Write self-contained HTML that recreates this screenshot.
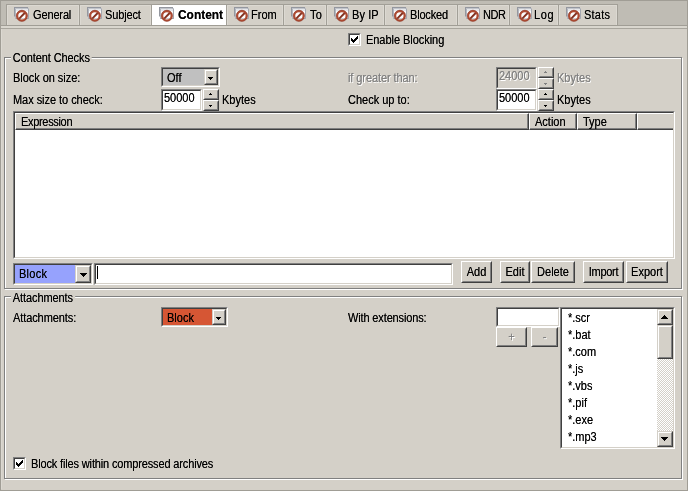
<!DOCTYPE html>
<html><head><meta charset="utf-8"><title>Content</title>
<style>
*{box-sizing:border-box;margin:0;padding:0}
html,body{width:688px;height:491px;overflow:hidden}
body{background:#d4d0c8;font-family:"Liberation Sans",sans-serif;font-size:11px;color:#000;position:relative;line-height:13px;text-shadow:0 0 0 rgba(0,0,0,.75)}
#w{position:absolute;left:0;top:0;width:688px;height:491px;will-change:transform;transform:translateZ(0)}
.a{position:absolute;white-space:nowrap}
.t{position:absolute;white-space:nowrap;height:13px;line-height:13px;font-size:12px;transform:scaleX(.9167);transform-origin:0 0}
.tab{position:absolute;top:4px;height:21px;border:1px solid #a29f97;border-bottom:none;background:#d4d0c8;box-shadow:inset 1px 1px 0 #dcd9d2,inset -1px 0 0 #dcd9d2}
.tab.sel{background:#fff;box-shadow:none}
.tab .ic{position:absolute;left:7px;top:2px}
.tab span{position:absolute;top:4px;height:13px;line-height:13px;white-space:nowrap;font-size:12px;transform:scaleX(.9167);transform-origin:0 0}
.sunk{position:absolute;border:1px solid;border-color:#808080 #fff #fff #808080;background:#fff;overflow:hidden}
.sunk:before{content:"";position:absolute;left:0;top:0;right:0;bottom:0;border:1px solid;border-color:#404040 #d4d0c8 #d4d0c8 #404040;pointer-events:none;z-index:5}
.btn{position:absolute;border:1px solid;border-color:#fff #404040 #404040 #fff;background:#d4d0c8;text-align:center}
.btn:before{content:"";position:absolute;left:0;top:0;right:0;bottom:0;border:1px solid;border-color:#d4d0c8 #808080 #808080 #d4d0c8;pointer-events:none}
.sb{border-color:#d4d0c8 #404040 #404040 #d4d0c8}
.sb:before{border-color:#fff #808080 #808080 #fff}
.btn span{position:absolute;left:0;right:0;text-align:center;height:13px;line-height:13px;font-size:12px;transform:scaleX(.9167);transform-origin:50% 0}
.grp{position:absolute;border:1px solid #808080;box-shadow:1px 1px 0 #fff, inset 1px 1px 0 #fff}
.leg{position:absolute;background:#d4d0c8;height:13px;line-height:13px;padding:0 2px;white-space:nowrap;font-size:12px;transform:scaleX(.9167);transform-origin:0 0}
.dis{color:#808080;text-shadow:0 0 0 rgba(128,128,128,.7),1px 1px 0 #fff}
.ar{position:absolute;display:block}
.chk{position:absolute;width:13px;height:13px;border:1px solid;border-color:#808080 #fff #fff #808080;background:#fff}
.chk:before{content:"";position:absolute;left:0;top:0;right:0;bottom:0;border:1px solid;border-color:#404040 #d4d0c8 #d4d0c8 #404040}
.chk svg{position:absolute;left:2px;top:2px}
.hd{position:absolute;top:1px;height:17px;background:#d4d0c8;border:1px solid;border-color:#fff #404040 #404040 #fff;box-shadow:inset -1px -1px 0 #808080}
</style></head><body><div id="w">

<div class="a" style="left:0;top:0;width:688px;height:491px;border:1px solid #a09d95"></div>
<div class="a" style="left:1px;top:1px;width:686px;height:24px;background:#bfbcb4"></div>
<div class="a" style="left:1px;top:25px;width:686px;height:1px;background:#a09d95"></div>
<div class="a" style="left:1px;top:26px;width:686px;height:2px;background:#d9d6ce"></div>
<div class="a" style="left:1px;top:28px;width:686px;height:1px;background:#a8a59d"></div>
<div class="a" style="left:1px;top:29px;width:1px;height:460px;background:#dcd9d2"></div>
<div class="tab" style="left:6px;width:74px"><svg class="ic" width="17" height="15" viewBox="0 0 17 15"><rect x="0.5" y="0.5" width="13" height="8.5" fill="#f4f4f6" stroke="#94979f"/><rect x="1.5" y="1.7" width="13" height="9.8" fill="#fafafb" stroke="#b4b7bf"/><path d="M14.5 2.2v9.3H1.8" fill="none" stroke="#a3a6ae"/><rect x="2" y="2.2" width="12" height="1.8" fill="#e4e6eb"/><circle cx="7.9" cy="8.8" r="4.7" fill="rgba(255,255,255,0.45)" stroke="#b04d34" stroke-width="2.1"/><circle cx="7.9" cy="8.8" r="5.6" fill="none" stroke="#83291a" stroke-width="0.6" opacity="0.8"/><path d="M5.2 11.6 L10.7 6" stroke="#84301f" stroke-width="1.9"/></svg><span style="left:26px;letter-spacing:-0.15px">General</span></div>
<div class="tab" style="left:79px;width:73px"><svg class="ic" width="17" height="15" viewBox="0 0 17 15"><rect x="0.5" y="0.5" width="13" height="8.5" fill="#f4f4f6" stroke="#94979f"/><rect x="1.5" y="1.7" width="13" height="9.8" fill="#fafafb" stroke="#b4b7bf"/><path d="M14.5 2.2v9.3H1.8" fill="none" stroke="#a3a6ae"/><rect x="2" y="2.2" width="12" height="1.8" fill="#e4e6eb"/><circle cx="7.9" cy="8.8" r="4.7" fill="rgba(255,255,255,0.45)" stroke="#b04d34" stroke-width="2.1"/><circle cx="7.9" cy="8.8" r="5.6" fill="none" stroke="#83291a" stroke-width="0.6" opacity="0.8"/><path d="M5.2 11.6 L10.7 6" stroke="#84301f" stroke-width="1.9"/></svg><span style="left:25px;letter-spacing:-0.15px">Subject</span></div>
<div class="tab sel" style="left:151px;width:76px"><svg class="ic" width="17" height="15" viewBox="0 0 17 15"><rect x="0.5" y="0.5" width="13" height="8.5" fill="#f4f4f6" stroke="#94979f"/><rect x="1.5" y="1.7" width="13" height="9.8" fill="#fafafb" stroke="#b4b7bf"/><path d="M14.5 2.2v9.3H1.8" fill="none" stroke="#a3a6ae"/><rect x="2" y="2.2" width="12" height="1.8" fill="#e4e6eb"/><circle cx="7.9" cy="8.8" r="4.7" fill="rgba(255,255,255,0.45)" stroke="#b04d34" stroke-width="2.1"/><circle cx="7.9" cy="8.8" r="5.6" fill="none" stroke="#83291a" stroke-width="0.6" opacity="0.8"/><path d="M5.2 11.6 L10.7 6" stroke="#84301f" stroke-width="1.9"/></svg><span style="font-weight:bold;transform:scaleX(0.995);transform-origin:0 0;left:26px;letter-spacing:0px">Content</span></div>
<div class="tab" style="left:226px;width:58px"><svg class="ic" width="17" height="15" viewBox="0 0 17 15"><rect x="0.5" y="0.5" width="13" height="8.5" fill="#f4f4f6" stroke="#94979f"/><rect x="1.5" y="1.7" width="13" height="9.8" fill="#fafafb" stroke="#b4b7bf"/><path d="M14.5 2.2v9.3H1.8" fill="none" stroke="#a3a6ae"/><rect x="2" y="2.2" width="12" height="1.8" fill="#e4e6eb"/><circle cx="7.9" cy="8.8" r="4.7" fill="rgba(255,255,255,0.45)" stroke="#b04d34" stroke-width="2.1"/><circle cx="7.9" cy="8.8" r="5.6" fill="none" stroke="#83291a" stroke-width="0.6" opacity="0.8"/><path d="M5.2 11.6 L10.7 6" stroke="#84301f" stroke-width="1.9"/></svg><span style="left:24px;letter-spacing:0px">From</span></div>
<div class="tab" style="left:283px;width:44px"><svg class="ic" width="17" height="15" viewBox="0 0 17 15"><rect x="0.5" y="0.5" width="13" height="8.5" fill="#f4f4f6" stroke="#94979f"/><rect x="1.5" y="1.7" width="13" height="9.8" fill="#fafafb" stroke="#b4b7bf"/><path d="M14.5 2.2v9.3H1.8" fill="none" stroke="#a3a6ae"/><rect x="2" y="2.2" width="12" height="1.8" fill="#e4e6eb"/><circle cx="7.9" cy="8.8" r="4.7" fill="rgba(255,255,255,0.45)" stroke="#b04d34" stroke-width="2.1"/><circle cx="7.9" cy="8.8" r="5.6" fill="none" stroke="#83291a" stroke-width="0.6" opacity="0.8"/><path d="M5.2 11.6 L10.7 6" stroke="#84301f" stroke-width="1.9"/></svg><span style="left:26px;letter-spacing:0.3px">To</span></div>
<div class="tab" style="left:326px;width:59px"><svg class="ic" width="17" height="15" viewBox="0 0 17 15"><rect x="0.5" y="0.5" width="13" height="8.5" fill="#f4f4f6" stroke="#94979f"/><rect x="1.5" y="1.7" width="13" height="9.8" fill="#fafafb" stroke="#b4b7bf"/><path d="M14.5 2.2v9.3H1.8" fill="none" stroke="#a3a6ae"/><rect x="2" y="2.2" width="12" height="1.8" fill="#e4e6eb"/><circle cx="7.9" cy="8.8" r="4.7" fill="rgba(255,255,255,0.45)" stroke="#b04d34" stroke-width="2.1"/><circle cx="7.9" cy="8.8" r="5.6" fill="none" stroke="#83291a" stroke-width="0.6" opacity="0.8"/><path d="M5.2 11.6 L10.7 6" stroke="#84301f" stroke-width="1.9"/></svg><span style="left:25px;letter-spacing:0.1px">By IP</span></div>
<div class="tab" style="left:384px;width:74px"><svg class="ic" width="17" height="15" viewBox="0 0 17 15"><rect x="0.5" y="0.5" width="13" height="8.5" fill="#f4f4f6" stroke="#94979f"/><rect x="1.5" y="1.7" width="13" height="9.8" fill="#fafafb" stroke="#b4b7bf"/><path d="M14.5 2.2v9.3H1.8" fill="none" stroke="#a3a6ae"/><rect x="2" y="2.2" width="12" height="1.8" fill="#e4e6eb"/><circle cx="7.9" cy="8.8" r="4.7" fill="rgba(255,255,255,0.45)" stroke="#b04d34" stroke-width="2.1"/><circle cx="7.9" cy="8.8" r="5.6" fill="none" stroke="#83291a" stroke-width="0.6" opacity="0.8"/><path d="M5.2 11.6 L10.7 6" stroke="#84301f" stroke-width="1.9"/></svg><span style="left:25px;letter-spacing:-0.2px">Blocked</span></div>
<div class="tab" style="left:457px;width:53px"><svg class="ic" width="17" height="15" viewBox="0 0 17 15"><rect x="0.5" y="0.5" width="13" height="8.5" fill="#f4f4f6" stroke="#94979f"/><rect x="1.5" y="1.7" width="13" height="9.8" fill="#fafafb" stroke="#b4b7bf"/><path d="M14.5 2.2v9.3H1.8" fill="none" stroke="#a3a6ae"/><rect x="2" y="2.2" width="12" height="1.8" fill="#e4e6eb"/><circle cx="7.9" cy="8.8" r="4.7" fill="rgba(255,255,255,0.45)" stroke="#b04d34" stroke-width="2.1"/><circle cx="7.9" cy="8.8" r="5.6" fill="none" stroke="#83291a" stroke-width="0.6" opacity="0.8"/><path d="M5.2 11.6 L10.7 6" stroke="#84301f" stroke-width="1.9"/></svg><span style="left:25px;letter-spacing:-0.5px">NDR</span></div>
<div class="tab" style="left:509px;width:50px"><svg class="ic" width="17" height="15" viewBox="0 0 17 15"><rect x="0.5" y="0.5" width="13" height="8.5" fill="#f4f4f6" stroke="#94979f"/><rect x="1.5" y="1.7" width="13" height="9.8" fill="#fafafb" stroke="#b4b7bf"/><path d="M14.5 2.2v9.3H1.8" fill="none" stroke="#a3a6ae"/><rect x="2" y="2.2" width="12" height="1.8" fill="#e4e6eb"/><circle cx="7.9" cy="8.8" r="4.7" fill="rgba(255,255,255,0.45)" stroke="#b04d34" stroke-width="2.1"/><circle cx="7.9" cy="8.8" r="5.6" fill="none" stroke="#83291a" stroke-width="0.6" opacity="0.8"/><path d="M5.2 11.6 L10.7 6" stroke="#84301f" stroke-width="1.9"/></svg><span style="left:24px;letter-spacing:0.7px">Log</span></div>
<div class="tab" style="left:558px;width:60px"><svg class="ic" width="17" height="15" viewBox="0 0 17 15"><rect x="0.5" y="0.5" width="13" height="8.5" fill="#f4f4f6" stroke="#94979f"/><rect x="1.5" y="1.7" width="13" height="9.8" fill="#fafafb" stroke="#b4b7bf"/><path d="M14.5 2.2v9.3H1.8" fill="none" stroke="#a3a6ae"/><rect x="2" y="2.2" width="12" height="1.8" fill="#e4e6eb"/><circle cx="7.9" cy="8.8" r="4.7" fill="rgba(255,255,255,0.45)" stroke="#b04d34" stroke-width="2.1"/><circle cx="7.9" cy="8.8" r="5.6" fill="none" stroke="#83291a" stroke-width="0.6" opacity="0.8"/><path d="M5.2 11.6 L10.7 6" stroke="#84301f" stroke-width="1.9"/></svg><span style="left:25px;letter-spacing:0.25px">Stats</span></div>
<div class="chk" style="left:348px;top:33px"><svg width="7" height="7" viewBox="0 0 7 7" shape-rendering="crispEdges"><path d="M0 2h1v1h1v1h1v-1h1v-1h1v-1h1v-1h1v3h-1v1h-1v1h-1v1h-1v1h-1v-1h-1v-1h-1z" fill="#000"/></svg></div>
<div class="t" style="left:366px;top:34px;letter-spacing:-0.05px">Enable Blocking</div>
<div class="grp" style="left:4px;top:57px;width:678px;height:232px"></div>
<div class="leg" style="left:11px;top:52px;letter-spacing:-0.1px">Content Checks</div>
<div class="t" style="left:13px;top:72px;letter-spacing:-0.05px">Block on size:</div>
<div class="t" style="left:13px;top:94px;letter-spacing:-0.05px">Max size to check:</div>
<div class="t dis" style="left:348px;top:72px;letter-spacing:-0.1px">if greater than:</div>
<div class="t" style="left:348px;top:94px">Check up to:</div>
<div class="sunk" style="left:161px;top:67px;width:59px;height:20px;background:#c0c0c0"><div class="t" style="left:5px;top:4px">Off</div><div class="btn sb" style="left:42px;top:1px;width:14px;height:16px"><svg class="ar" style="left:3px;top:7px" width="5" height="3" shape-rendering="crispEdges" fill="#000"><rect x="0" y="0" width="5" height="1"/><rect x="1" y="1" width="3" height="1"/><rect x="2" y="2" width="1" height="1"/></svg></div></div>
<div class="sunk" style="left:161px;top:89px;width:41px;height:22px;background:#fff"><div class="t" style="left:2px;top:2px">50000</div></div><div class="btn" style="left:203px;top:89px;width:16px;height:11px"><svg class="ar" style="left:5px;top:3px" width="3" height="2" shape-rendering="crispEdges" fill="#000"><rect x="0" y="1" width="3" height="1"/><rect x="1" y="0" width="1" height="1"/></svg></div><div class="btn" style="left:203px;top:100px;width:16px;height:11px"><svg class="ar" style="left:5px;top:4px" width="3" height="2" shape-rendering="crispEdges" fill="#000"><rect x="0" y="0" width="3" height="1"/><rect x="1" y="1" width="1" height="1"/></svg></div>
<div class="t" style="left:222px;top:94px">Kbytes</div>
<div class="sunk" style="left:496px;top:67px;width:41px;height:22px;background:#d4d0c8"><div class="t dis" style="left:2px;top:2px">24000</div></div><div class="btn" style="left:538px;top:67px;width:16px;height:11px"><svg class="ar" style="left:5px;top:3px" width="3" height="2" shape-rendering="crispEdges" fill="#808080"><rect x="0" y="1" width="3" height="1"/><rect x="1" y="0" width="1" height="1"/></svg></div><div class="btn" style="left:538px;top:78px;width:16px;height:11px"><svg class="ar" style="left:5px;top:4px" width="3" height="2" shape-rendering="crispEdges" fill="#808080"><rect x="0" y="0" width="3" height="1"/><rect x="1" y="1" width="1" height="1"/></svg></div>
<div class="t dis" style="left:557px;top:72px">Kbytes</div>
<div class="sunk" style="left:496px;top:89px;width:41px;height:22px;background:#fff"><div class="t" style="left:2px;top:2px">50000</div></div><div class="btn" style="left:538px;top:89px;width:16px;height:11px"><svg class="ar" style="left:5px;top:3px" width="3" height="2" shape-rendering="crispEdges" fill="#000"><rect x="0" y="1" width="3" height="1"/><rect x="1" y="0" width="1" height="1"/></svg></div><div class="btn" style="left:538px;top:100px;width:16px;height:11px"><svg class="ar" style="left:5px;top:4px" width="3" height="2" shape-rendering="crispEdges" fill="#000"><rect x="0" y="0" width="3" height="1"/><rect x="1" y="1" width="1" height="1"/></svg></div>
<div class="t" style="left:557px;top:94px">Kbytes</div>
<div class="sunk" style="left:13px;top:111px;width:662px;height:148px"><div class="hd" style="left:1px;width:514px"><div class="t" style="left:5px;top:2px;letter-spacing:-0.35px">Expression</div></div><div class="hd" style="left:515px;width:48px"><div class="t" style="left:5px;top:2px">Action</div></div><div class="hd" style="left:563px;width:60px"><div class="t" style="left:5px;top:2px">Type</div></div><div class="hd" style="left:623px;width:60px"><div class="t" style="left:5px;top:2px"></div></div></div>
<div class="sunk" style="left:13px;top:263px;width:80px;height:22px;background:#96a2fd"><div class="t" style="left:5px;top:4px;letter-spacing:0.3px">Block</div><div class="btn sb" style="left:61px;top:1px;width:16px;height:18px"><svg class="ar" style="left:4px;top:7px" width="7" height="4" shape-rendering="crispEdges" fill="#000"><rect x="0" y="0" width="7" height="1"/><rect x="1" y="1" width="5" height="1"/><rect x="2" y="2" width="3" height="1"/><rect x="3" y="3" width="1" height="1"/></svg></div></div>
<div class="sunk" style="left:94px;top:263px;width:359px;height:22px"><div class="a" style="left:2px;top:2px;width:1px;height:13px;background:#000"></div></div>
<div class="btn" style="left:461px;top:261px;width:31px;height:22px"><span class="" style="top:4px">Add</span></div>
<div class="btn" style="left:500px;top:261px;width:30px;height:22px"><span class="" style="top:4px">Edit</span></div>
<div class="btn" style="left:531px;top:261px;width:44px;height:22px"><span class="" style="top:4px">Delete</span></div>
<div class="btn" style="left:583px;top:261px;width:41px;height:22px"><span class="" style="top:4px;letter-spacing:-0.3px">Import</span></div>
<div class="btn" style="left:626px;top:261px;width:42px;height:22px"><span class="" style="top:4px">Export</span></div>
<div class="grp" style="left:4px;top:296px;width:678px;height:183px"></div>
<div class="leg" style="left:11px;top:292px;letter-spacing:-0.1px">Attachments</div>
<div class="t" style="left:13px;top:312px;letter-spacing:-0.1px">Attachments:</div>
<div class="sunk" style="left:161px;top:307px;width:67px;height:20px;background:#d65634"><div class="t" style="left:5px;top:4px">Block</div><div class="btn sb" style="left:50px;top:1px;width:14px;height:16px"><svg class="ar" style="left:3px;top:7px" width="5" height="3" shape-rendering="crispEdges" fill="#000"><rect x="0" y="0" width="5" height="1"/><rect x="1" y="1" width="3" height="1"/><rect x="2" y="2" width="1" height="1"/></svg></div></div>
<div class="t" style="left:348px;top:312px;letter-spacing:-0.15px">With extensions:</div>
<div class="sunk" style="left:496px;top:307px;width:64px;height:20px"></div>
<div class="btn" style="left:496px;top:327px;width:31px;height:20px"><span class="dis" style="top:3px">+</span></div>
<div class="btn" style="left:531px;top:327px;width:27px;height:20px"><span class="dis" style="top:3px">-</span></div>
<div class="sunk" style="left:560px;top:307px;width:115px;height:142px"></div>
<div class="t" style="left:568px;top:312px">*.scr</div>
<div class="t" style="left:568px;top:329px">*.bat</div>
<div class="t" style="left:568px;top:346px">*.com</div>
<div class="t" style="left:568px;top:363px">*.js</div>
<div class="t" style="left:568px;top:380px">*.vbs</div>
<div class="t" style="left:568px;top:397px">*.pif</div>
<div class="t" style="left:568px;top:414px">*.exe</div>
<div class="t" style="left:568px;top:431px">*.mp3</div>
<div class="a" style="left:657px;top:309px;width:16px;height:138px;background:#fff;background-image:conic-gradient(#d4d0c8 25%,#fff 0 50%,#d4d0c8 0 75%,#fff 0);background-size:2px 2px"></div>
<div class="btn sb" style="left:657px;top:309px;width:16px;height:16px"><svg class="ar" style="left:3px;top:5px" width="7" height="4" shape-rendering="crispEdges" fill="#000"><rect x="0" y="3" width="7" height="1"/><rect x="1" y="2" width="5" height="1"/><rect x="2" y="1" width="3" height="1"/><rect x="3" y="0" width="1" height="1"/></svg></div>
<div class="btn sb" style="left:657px;top:325px;width:16px;height:34px"></div>
<div class="btn sb" style="left:657px;top:431px;width:16px;height:16px"><svg class="ar" style="left:3px;top:5px" width="7" height="4" shape-rendering="crispEdges" fill="#000"><rect x="0" y="0" width="7" height="1"/><rect x="1" y="1" width="5" height="1"/><rect x="2" y="2" width="3" height="1"/><rect x="3" y="3" width="1" height="1"/></svg></div>
<div class="chk" style="left:13px;top:457px"><svg width="7" height="7" viewBox="0 0 7 7" shape-rendering="crispEdges"><path d="M0 2h1v1h1v1h1v-1h1v-1h1v-1h1v-1h1v3h-1v1h-1v1h-1v1h-1v1h-1v-1h-1v-1h-1z" fill="#000"/></svg></div>
<div class="t" style="left:31px;top:458px;letter-spacing:-0.16px">Block files within compressed archives</div>
</div></body></html>
